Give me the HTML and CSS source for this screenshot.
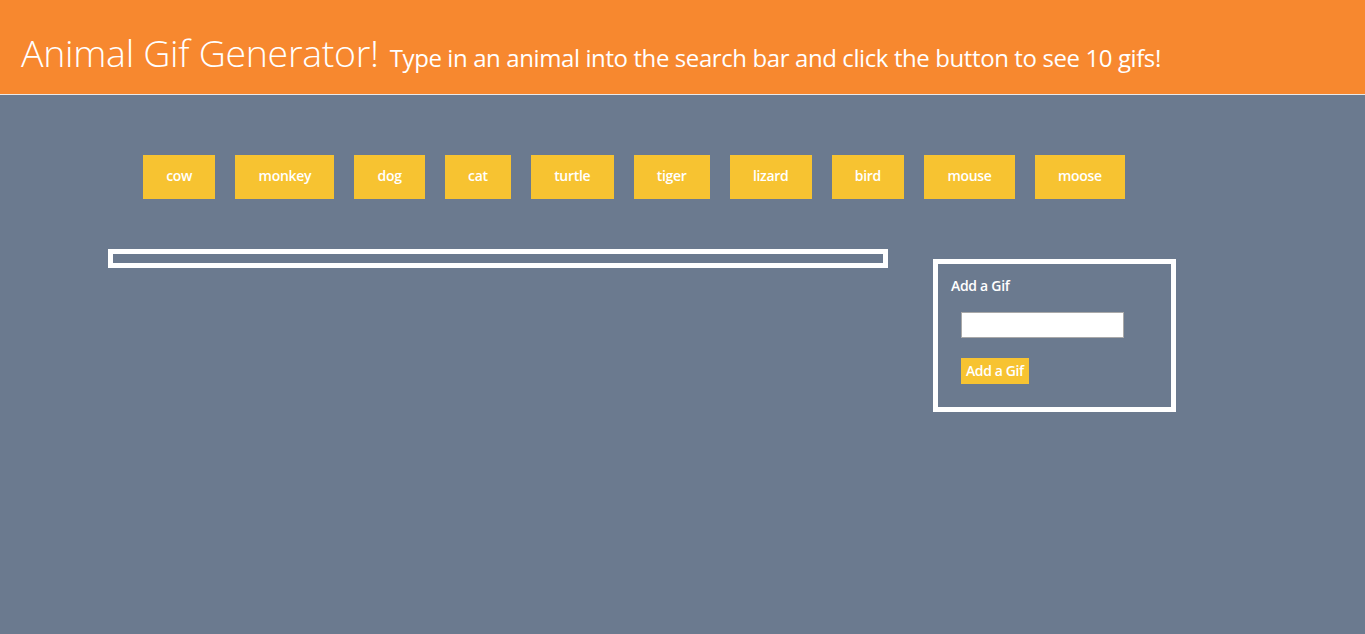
FILE: index.html
```html
<!DOCTYPE html>
<html lang="en">
<head>
<meta charset="utf-8">
<title>Animal Gif Generator</title>
<link rel="stylesheet" href="styles.css">
</head>
<body>
<header class="site-header">
  <h1 class="title">Animal Gif Generator!</h1>
  <span class="subtitle">Type in an animal into the search bar and click the button to see 10 gifs!</span>
</header>
<main class="main">
  <div class="animal-buttons">
    <button class="animal-btn">cow</button>
    <button class="animal-btn">monkey</button>
    <button class="animal-btn">dog</button>
    <button class="animal-btn">cat</button>
    <button class="animal-btn">turtle</button>
    <button class="animal-btn">tiger</button>
    <button class="animal-btn">lizard</button>
    <button class="animal-btn">bird</button>
    <button class="animal-btn">mouse</button>
    <button class="animal-btn">moose</button>
  </div>
  <div class="content">
    <div class="gif-area"></div>
    <form class="add-box">
      <label class="add-label" for="animal-input">Add a Gif</label>
      <input class="add-input" id="animal-input" type="text">
      <button class="add-btn" type="button">Add a Gif</button>
    </form>
  </div>
</main>
</body>
</html>
```

FILE: styles.css
```css
html, body {
  margin: 0;
  padding: 0;
}
body {
  background: #6B7A8F;
  font-family: "Open Sans", "Liberation Sans", sans-serif;
  color: #fff;
  min-height: 634px;
}
.site-header {
  background: #F7882F;
  height: 81px;
  padding: 13px 0 0 21px;
  border-bottom: 1px solid #e9e9e9;
  display: flex;
  align-items: baseline;
  overflow: hidden;
}
.title {
  margin: 0;
  font-weight: 300;
  font-size: 37.5px;
  line-height: 80px;
  letter-spacing: -0.3px;
  white-space: nowrap;
}
.subtitle {
  margin-left: 11px;
  font-size: 24px;
  font-weight: 400;
  letter-spacing: -0.4px;
  white-space: nowrap;
}
.main {
  padding-top: 60px;
}
.animal-buttons {
  display: flex;
  gap: 20px;
  padding-left: 143px;
}
.animal-btn {
  height: 44px;
  padding: 0 23.2px 3px;
  border: none;
  background: #F7C331;
  color: #fff;
  font-family: "Open Sans", "Liberation Sans", sans-serif;
  font-size: 14px;
  font-weight: 600;
  letter-spacing: -0.3px;
}
.content {
  display: flex;
  align-items: flex-start;
  padding-left: 108px;
  margin-top: 50px;
}
.gif-area {
  width: 780px;
  height: 19px;
  box-sizing: border-box;
  border: 5px solid #fff;
}
.add-box {
  margin-left: 45px;
  margin-top: 10px;
  width: 243px;
  height: 153px;
  box-sizing: border-box;
  border: 5px solid #fff;
  padding: 11px 0 0 13px;
  display: flex;
  flex-direction: column;
  align-items: flex-start;
}
.add-label {
  font-size: 14px;
  font-weight: 600;
  letter-spacing: -0.3px;
  line-height: 22px;
}
.add-input {
  margin: 15px 0 0 10px;
  width: 163px;
  height: 26px;
  box-sizing: border-box;
  border: 1px solid #a9a9a9;
  background: #fff;
  padding: 0 4px;
}
.add-btn {
  margin: 20px 0 0 10px;
  height: 26px;
  padding: 0 5px 2px;
  border: none;
  background: #F7C331;
  color: #fff;
  font-family: "Open Sans", "Liberation Sans", sans-serif;
  font-size: 14px;
  font-weight: 600;
  letter-spacing: -0.4px;
}
```
